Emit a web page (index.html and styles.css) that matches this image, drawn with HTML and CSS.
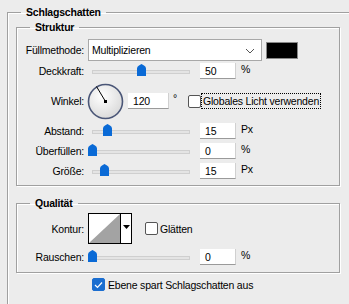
FILE: index.html
```html
<!DOCTYPE html>
<html lang="de">
<head>
    <meta charset="UTF-8">
    <title>Schlagschatten</title>
    <link rel="stylesheet" href="styles.css">
</head>
<body>
    <fieldset class="group outer">
        <legend>Schlagschatten</legend>

        <fieldset class="group inner">
            <legend>Struktur</legend>

            <div class="row row-blend">
                <span class="lbl">Füllmethode:</span>
                <div class="select">
                    <span>Multiplizieren</span>
                    <svg class="chevron" width="10" height="6" viewBox="0 0 10 6"><path d="M1 1 L5 5 L9 1" fill="none" stroke="#555" stroke-width="1"/></svg>
                </div>
                <div class="swatch"></div>
            </div>

            <div class="row row-opacity">
                <span class="lbl">Deckkraft:</span>
                <div class="slider"><div class="track"></div><svg class="thumb" style="left: 49px" width="9" height="12" viewBox="0 0 9 12"><path d="M0 4.5 Q0 2.5 2 1.5 L4.5 0 L7 1.5 Q9 2.5 9 4.5 V12 H0 Z" fill="#0a6ad6"/></svg></div>
                <div class="num">50</div>
                <span class="unit">%</span>
            </div>

            <div class="row row-angle">
                <span class="lbl">Winkel:</span>
                <svg class="dial" width="37" height="37" viewBox="0 0 37 37">
                    <defs>
                        <radialGradient id="dialFill" cx="40%" cy="35%" r="70%">
                            <stop offset="0" stop-color="#ffffff"/>
                            <stop offset="1" stop-color="#d8d8d8"/>
                        </radialGradient>
                    </defs>
                    <circle cx="18.5" cy="18.5" r="17" fill="url(#dialFill)" stroke="#4a5677" stroke-width="1.6"/>
                    <line x1="18.5" y1="18.5" x2="9.5" y2="3.5" stroke="#000" stroke-width="1"/>
                    <rect x="17" y="17" width="3" height="3" fill="#000"/>
                </svg>
                <div class="num num-wide">120</div>
                <span class="unit unit-deg">°</span>
                <label class="check">
                    <span class="box"></span>
                    <span class="focus">Globales Licht verwenden</span>
                </label>
            </div>

            <div class="row row-distance">
                <span class="lbl">Abstand:</span>
                <div class="slider"><div class="track"></div><svg class="thumb" style="left: 15px" width="9" height="12" viewBox="0 0 9 12"><path d="M0 4.5 Q0 2.5 2 1.5 L4.5 0 L7 1.5 Q9 2.5 9 4.5 V12 H0 Z" fill="#0a6ad6"/></svg></div>
                <div class="num">15</div>
                <span class="unit">Px</span>
            </div>

            <div class="row row-spread">
                <span class="lbl">Überfüllen:</span>
                <div class="slider"><div class="track"></div><svg class="thumb" style="left: 0px" width="9" height="12" viewBox="0 0 9 12"><path d="M0 4.5 Q0 2.5 2 1.5 L4.5 0 L7 1.5 Q9 2.5 9 4.5 V12 H0 Z" fill="#0a6ad6"/></svg></div>
                <div class="num">0</div>
                <span class="unit">%</span>
            </div>

            <div class="row row-size">
                <span class="lbl">Größe:</span>
                <div class="slider"><div class="track"></div><svg class="thumb" style="left: 12px" width="9" height="12" viewBox="0 0 9 12"><path d="M0 4.5 Q0 2.5 2 1.5 L4.5 0 L7 1.5 Q9 2.5 9 4.5 V12 H0 Z" fill="#0a6ad6"/></svg></div>
                <div class="num">15</div>
                <span class="unit">Px</span>
            </div>
        </fieldset>

        <fieldset class="group inner quality">
            <legend>Qualität</legend>

            <div class="row row-contour">
                <span class="lbl">Kontur:</span>
                <div class="contour">
                    <svg class="curve" width="31" height="29" viewBox="0 0 31 29">
                        <rect width="31" height="29" fill="#fff"/>
                        <path d="M0 29 L31 0 V29 Z" fill="#a3a3a3"/>
                    </svg>
                    <div class="contour-arrow">
                        <svg width="7" height="4" viewBox="0 0 7 4"><path d="M0 0 H7 L3.5 4 Z" fill="#000"/></svg>
                    </div>
                </div>
                <label class="check check-smooth">
                    <span class="box"></span>
                    <span>Glätten</span>
                </label>
            </div>

            <div class="row row-noise">
                <span class="lbl">Rauschen:</span>
                <div class="slider"><div class="track"></div><svg class="thumb" style="left: 0px" width="9" height="12" viewBox="0 0 9 12"><path d="M0 4.5 Q0 2.5 2 1.5 L4.5 0 L7 1.5 Q9 2.5 9 4.5 V12 H0 Z" fill="#0a6ad6"/></svg></div>
                <div class="num">0</div>
                <span class="unit">%</span>
            </div>
        </fieldset>

        <label class="check knockout">
            <span class="box checked">
                <svg width="9" height="8" viewBox="0 0 9 8"><path d="M1 4 L3.5 6.5 L8 1.5" fill="none" stroke="#fff" stroke-width="1.2"/></svg>
            </span>
            <span>Ebene spart Schlagschatten aus</span>
        </label>
    </fieldset>
</body>
</html>
```

FILE: styles.css
```css
body {
    margin: 0;
    padding: 5px 0 0 7px;
    background-color: #ececec;
    font-family: "Liberation Sans", Arial, sans-serif;
    font-size: 10.5px;
    letter-spacing: -0.2px;
    color: #000;
    overflow: hidden;
}
.group {
    margin: 0;
    border: 1px solid #a0a0a0;
    box-shadow: 1px 1px 0 #fff, inset 1px 1px 0 #fff;
}
.group legend {
    margin-left: 13px;
    padding: 0 5px;
    font-weight: bold;
    line-height: 14px;
}
.outer {
    height: 320px;
    padding: 1px 0 0 0;
    border-right: none;
    border-bottom: none;
    box-shadow: inset 1px 1px 0 #fff;
}
.outer > legend {
    margin-left: 13px;
}
.inner {
    box-sizing: border-box;
    width: 324px;
    margin-left: 8px;
    padding: 5px 0 4px 0;
}
.quality {
    margin-top: 10px;
    padding: 3px 0 5px 0;
}
.row {
    display: flex;
    align-items: center;
    height: 20px;
}
.lbl {
    width: 67px;
    margin-right: 4px;
    text-align: right;
}
.row-blend {
    height: 22px;
}
.row-angle {
    height: 40px;
}
.select {
    box-sizing: border-box;
    display: flex;
    align-items: center;
    justify-content: space-between;
    width: 174px;
    height: 22px;
    padding: 0 6px 0 3px;
    background-color: #fff;
    border: 1px solid #a8a8a8;
}
.chevron {
    margin-top: 1px;
}
.swatch {
    width: 30px;
    height: 15px;
    margin-left: 4px;
    background-color: #000;
    border: 1px solid #888;
}
.slider {
    position: relative;
    width: 106px;
    height: 14px;
    margin-right: 6px;
}
.track {
    position: absolute;
    left: 4px;
    right: 4px;
    top: 6px;
    height: 2px;
    background-color: #e4e4e4;
    border: 1px solid #cfcfcf;
}
.thumb {
    position: absolute;
    top: 0;
}
.num {
    box-sizing: border-box;
    width: 36px;
    height: 16px;
    padding: 2px 0 0 5px;
    background-color: #fff;
    border-bottom: 1px solid #9a9a9a;
    border-right: 1px solid #d0d0d0;
}
.num-wide {
    width: 41px;
    margin-left: 4px;
}
.dial {
    margin-left: -1px;
}
.unit {
    margin-left: 5px;
    margin-bottom: 4px;
}
.unit-deg {
    margin-left: 4px;
    margin-bottom: 6px;
}
.check {
    display: flex;
    align-items: center;
}
.box {
    box-sizing: border-box;
    display: flex;
    align-items: center;
    justify-content: center;
    width: 13px;
    height: 13px;
    background-color: #fff;
    border: 1px solid #555;
    border-radius: 2px;
}
.row-angle .check {
    margin-left: 11px;
}
.focus {
    margin-left: 1px;
    padding: 1px;
    outline: 1px dotted #000;
}
.row-contour {
    height: 31px;
}
.contour {
    display: flex;
    border: 1px solid #000;
}
.curve {
    display: block;
    border-right: 1px solid #000;
}
.contour-arrow {
    display: flex;
    justify-content: center;
    width: 10px;
    padding-top: 11px;
    background-color: #fff;
}
.check-smooth {
    margin-left: 13px;
}
.check-smooth .box {
    margin-right: 2px;
}
.row-noise {
    margin-top: 3px;
}
.knockout {
    margin: 5px 0 0 84px;
}
.knockout .box {
    margin-right: 3px;
}
.box.checked {
    background-color: #1b6ed0;
    border-color: #1b6ed0;
}
```
